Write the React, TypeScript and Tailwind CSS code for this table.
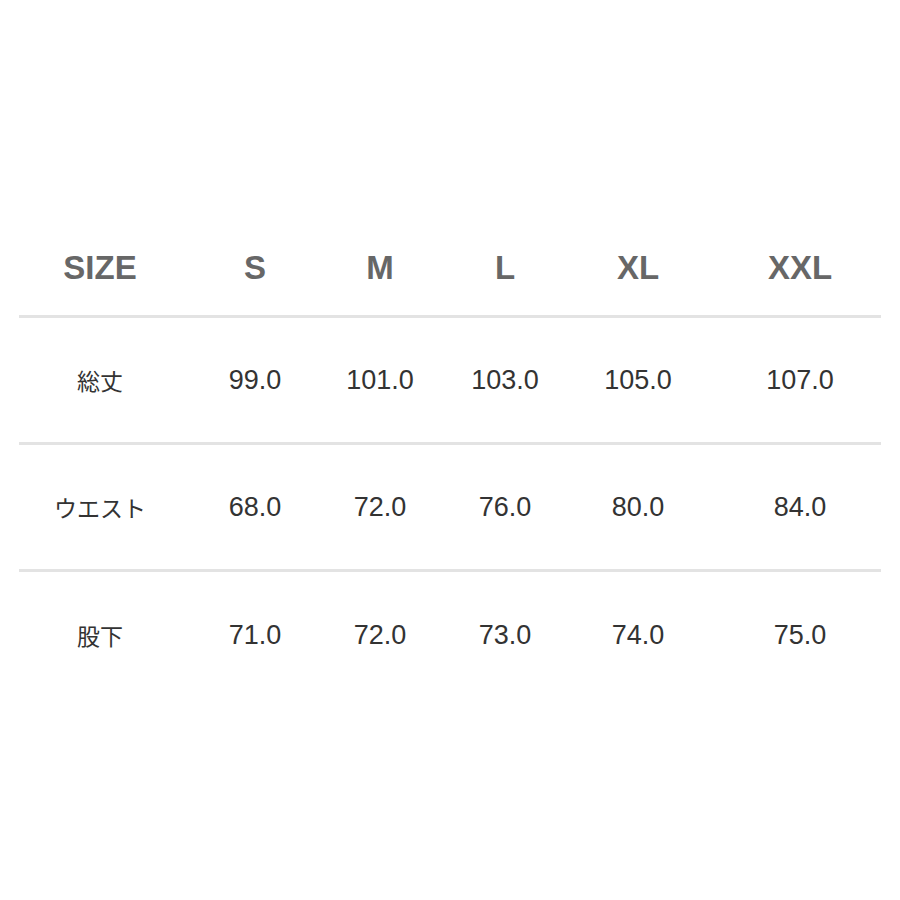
const sizes = ['S', 'M', 'L', 'XL', 'XXL'];

const rows = [
  { label: '総丈', values: ['99.0', '101.0', '103.0', '105.0', '107.0'] },
  { label: 'ウエスト', values: ['68.0', '72.0', '76.0', '80.0', '84.0'] },
  { label: '股下', values: ['71.0', '72.0', '73.0', '74.0', '75.0'] },
];

const grid = 'grid grid-cols-[162px_148px_102px_148px_118px_1fr] items-center';
const numFont = { fontFamily: '"Liberation Sans", Arial, sans-serif' };

export default function App() {
  return (
    <div className="w-[900px] h-[900px] bg-white">
      <div className="pt-[221px] pl-[19px] w-[881px]">
        {/* header */}
        <div
          className={`${grid} h-[97px] border-b-[3px] border-[#e3e3e3] text-[33px] font-bold text-[#676767]`}
          style={numFont}
        >
          <div className="text-center">SIZE</div>
          {sizes.map((s, i) => (
            <div key={s} className={i === 4 ? 'text-center pl-[22px]' : 'text-center'}>
              {s}
            </div>
          ))}
        </div>

        {rows.map((row, r) => (
          <div
            key={row.label}
            className={`${grid} h-[127px] ${r < rows.length - 1 ? 'border-b-[3px] border-[#e3e3e3]' : ''}`}
          >
            <div
              className="text-center text-[23px] text-[#333]"
              style={{ fontFamily: '"Noto Sans CJK JP", sans-serif' }}
            >
              {row.label}
            </div>
            {row.values.map((v, i) => (
              <div
                key={i}
                className={`text-center text-[27px] text-[#333] ${i === 4 ? 'pl-[22px]' : ''}`}
                style={numFont}
              >
                {v}
              </div>
            ))}
          </div>
        ))}
      </div>
    </div>
  );
}
